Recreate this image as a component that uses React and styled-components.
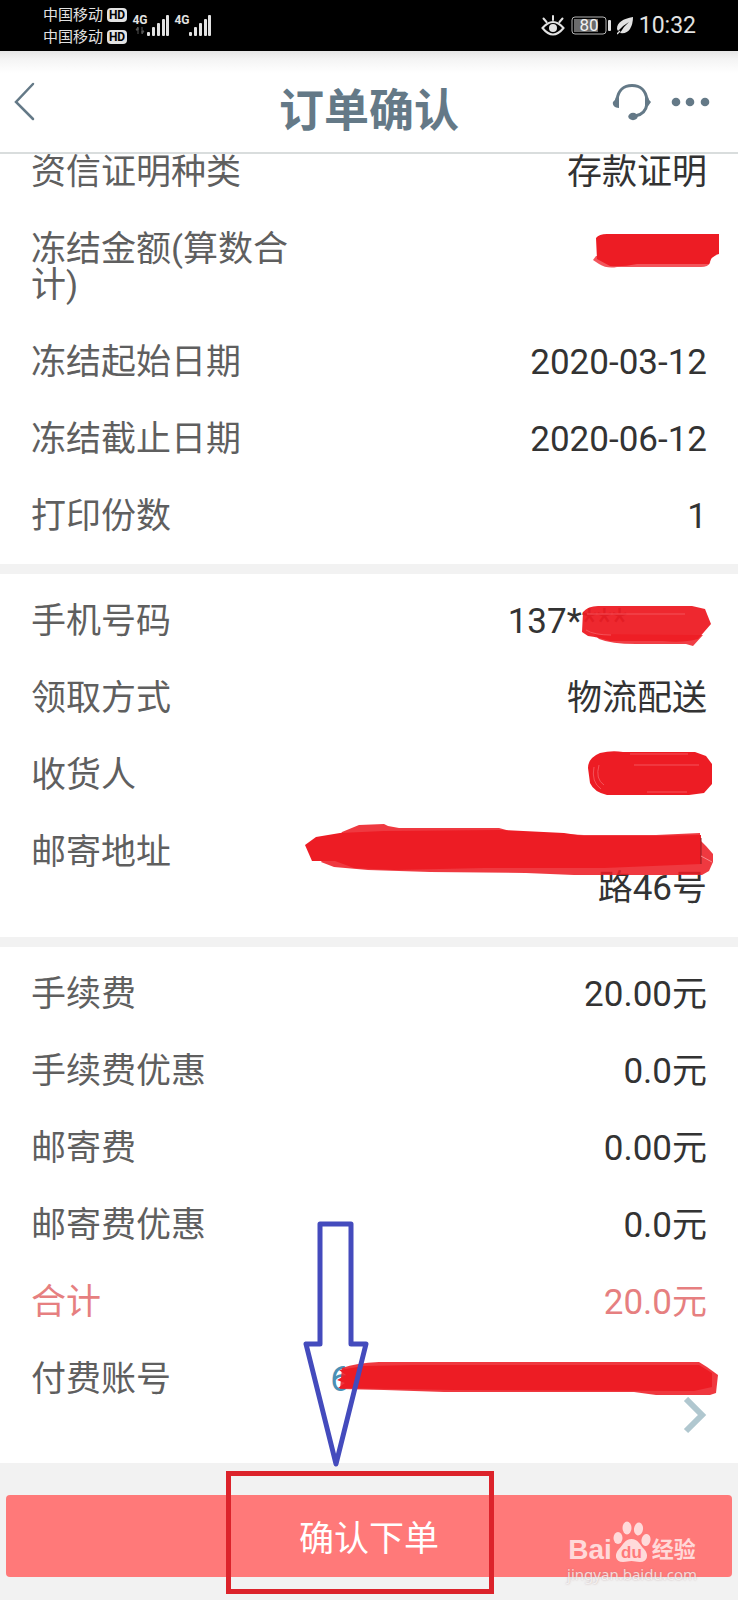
import React from 'react';
import styled, { createGlobalStyle } from 'styled-components';

const GlobalStyle = createGlobalStyle`
  * { box-sizing: border-box; }
  body {
    margin: 0;
    background: #f2f2f2;
    font-family: Roboto, "Noto Sans CJK SC", sans-serif;
    color: #333;
  }
  button { font-family: inherit; border: 0; padding: 0; background: none; cursor: pointer; }
  svg { display: block; flex: none; }
`;

const Page = styled.div`
  display: flex;
  flex-direction: column;
  min-height: 100vh;
  overflow: hidden;
`;

const StatusBar = styled.div`
  display: flex;
  align-items: center;
  justify-content: space-between;
  height: 51px;
  padding: 0 42px 0 43px;
  background: #000;
  color: #e2e2e2;
`;

const StatusGroup = styled.div`
  display: flex;
  align-items: center;
  gap: 6px;
`;

const Carriers = styled.div`
  display: flex;
  flex-direction: column;
`;

const Carrier = styled.div`
  display: flex;
  align-items: center;
  gap: 4px;
  font-size: 15px;
  line-height: 22px;
`;

const HdBadge = styled.span`
  width: 20px;
  height: 14px;
  border-radius: 4px;
  background: #e2e2e2;
  color: #000;
  font-size: 12px;
  font-weight: 700;
  line-height: 14px;
  text-align: center;
`;

const Network = styled.div`
  display: flex;
  align-items: flex-start;
`;

const NetworkType = styled.span`
  display: flex;
  flex-direction: column;
  align-items: center;
  width: 14px;
  font-family: "Liberation Sans Narrow", Roboto, sans-serif;
  font-size: 12px;
  font-weight: 700;
  line-height: 12px;
`;

const Clock = styled.time`
  font-size: 23px;
  line-height: 28px;
`;

const Header = styled.header`
  display: grid;
  grid-template-columns: 1fr auto 1fr;
  align-items: center;
  height: 103px;
  padding: 0 13px;
  border-bottom: 2px solid #d9dddd;
  background: linear-gradient(#e6e6e6, #f4f4f4 8px, #fff 22px);
  color: #647987;
`;

const Title = styled.h1`
  margin: 0;
  padding-top: 20px;
  font-size: 45px;
  font-weight: 700;
  line-height: 52px;
`;

const HeaderActions = styled.div`
  display: flex;
  align-items: center;
  justify-content: flex-end;
  gap: 18px;
  padding-right: 15px;
`;

const IconButton = styled.button`
  display: block;
  justify-self: start;
  color: inherit;
`;

const Section = styled.dl`
  display: flex;
  flex-direction: column;
  gap: 41px;
  margin: 0;
  padding: ${({ $first }) => ($first ? '1px 31px 29px' : '30px 31px 30px')};
  background: #fff;

  & + & {
    border-top: 10px solid #f2f2f2;
  }
`;

const Row = styled.div`
  display: flex;
  justify-content: space-between;
  font-size: 35px;
  line-height: 36px;
  color: ${({ $accent }) => ($accent ? '#e67f80' : 'inherit')};
`;

const Label = styled.dt`
  width: 40%;
  color: ${({ $accent }) => ($accent ? 'inherit' : '#5f5f5f')};
`;

const Value = styled.dd`
  display: flex;
  flex-direction: column;
  align-items: flex-end;
  width: 60%;
  margin: 0;
`;

const Line = styled.div`
  display: flex;
  align-items: center;
  justify-content: flex-end;
  height: 36px;
`;

const AccountDigit = styled.span`
  color: #4a90b5;
`;

const Mask = styled.svg`
  position: relative;
  margin-left: -${({ $overlap }) => $overlap || 0}px;
  margin-right: -${({ $bleed }) => $bleed || 0}px;
  fill: #ed1c24;
`;

const Footer = styled.footer`
  position: relative;
  flex: 1;
  margin-top: -1px;
  padding: 32px 6px 22px;
  background: #f2f2f2;
`;

const SubmitButton = styled.button`
  display: block;
  width: 100%;
  height: 82px;
  padding-top: 8px;
  border-radius: 4px;
  background: #ff7979;
  color: #fff;
  font-size: 35px;
  line-height: 36px;
`;

const HighlightBox = styled.div`
  position: absolute;
  top: 8px;
  left: calc(50% - 143px);
  width: 268px;
  height: 123px;
  border: 5px solid #dc232b;
  pointer-events: none;
`;

const Arrow = styled.svg`
  position: absolute;
  top: -243px;
  left: calc(50% - 67px);
  pointer-events: none;
`;

const Watermark = styled.div`
  position: absolute;
  top: 58px;
  right: 41px;
  display: flex;
  flex-direction: column;
  align-items: center;
  color: rgba(255, 255, 255, 0.72);
  pointer-events: none;
`;

const WatermarkBrand = styled.div`
  display: flex;
  align-items: flex-end;
  gap: 1px;
  height: 43px;
`;

const BrandLatin = styled.span`
  font-family: "Liberation Sans", sans-serif;
  font-size: 28px;
  font-weight: 700;
  line-height: 28px;
`;

const BrandHan = styled.span`
  font-size: 22px;
  font-weight: 700;
  line-height: 28px;
`;

const WatermarkSite = styled.span`
  font-family: "Noto Sans", sans-serif;
  font-size: 15px;
  line-height: 20px;
  text-shadow: 0 0 2px rgba(160, 120, 120, 0.6);
`;

function Signal({ traffic }) {
  return (
    <Network>
      <NetworkType>
        4G
        {traffic && (
          <svg width="10" height="9" viewBox="0 0 10 9" stroke="#555" fill="#555">
            <path d="M3 8V2M1 4l2-3v3z M7 1v6M9 5l-2 3V5z" />
          </svg>
        )}
      </NetworkType>
      <svg width="22" height="23" viewBox="0 0 22 23" fill="#e2e2e2">
        <rect x="0" y="18" width="3" height="4" rx="1" />
        <rect x="5" y="13" width="3" height="9" rx="1" />
        <rect x="10" y="9" width="3" height="13" rx="1" />
        <rect x="15" y="5" width="3" height="17" rx="1" />
        <rect x="19" y="1" width="3" height="21" rx="1" />
      </svg>
    </Network>
  );
}

function EyeIcon() {
  return (
    <svg width="24" height="22" viewBox="0 0 24 22" fill="none" stroke="#e2e2e2" strokeWidth="2" strokeLinecap="round">
      <path d="M1.500 13Q12 1 22.500 13Q12 26 1.500 13Z" />
      <circle cx="12" cy="13" r="4" fill="#e2e2e2" stroke="none" />
      <path d="M12 5V1M5.500 7L2.500 3.500M18.500 7L21.500 3.500" />
    </svg>
  );
}

function BatteryIcon() {
  return (
    <svg width="40" height="19" viewBox="0 0 40 19" role="img" aria-label="80%">
      <rect x="1" y="1" width="34" height="17" rx="3" fill="none" stroke="#b5b5b5" />
      <rect x="3" y="3" width="24" height="13" fill="#6b6b6b" />
      <rect x="37" y="4" width="3" height="11" rx="1" fill="#e2e2e2" />
      <text x="18" y="15" textAnchor="middle" fontSize="17" fontFamily="Roboto" fill="#f2f2f2">80</text>
    </svg>
  );
}

function LeafIcon() {
  return (
    <svg width="16" height="18" viewBox="0 0 16 18">
      <path d="M16 0C6 2 0 5 0 12L1 14Q5 9 12 5Q6 10 3 16Q10 17 13 12Q16 7 16 0Z" fill="#e2e2e2" />
      <path d="M0 17L3 14" stroke="#e2e2e2" strokeWidth="1.500" />
    </svg>
  );
}

function HeadsetIcon() {
  return (
    <svg width="40" height="38" viewBox="0 0 40 38" fill="none" stroke="currentColor">
      <path d="M5 17C6 7 12 2.500 20 2.500S34 7 35 17" strokeWidth="3" />
      <path d="M7 14V25C3 25 0 22 1 19Q3 18 4 14ZM33 14V25Q37 23 39 19Q37 18 36 14Z" fill="currentColor" stroke="none" />
      <path d="M35 21C34 28 30 32 23 33" strokeWidth="3" />
      <ellipse cx="21" cy="33.500" rx="4.700" ry="3.700" fill="currentColor" stroke="none" />
    </svg>
  );
}

function PawLogo() {
  return (
    <svg width="38" height="43" viewBox="0 0 38 43" fill="currentColor">
      <ellipse cx="5" cy="17" rx="4.500" ry="6" />
      <ellipse cx="14" cy="7" rx="4.500" ry="6.500" />
      <ellipse cx="25.500" cy="8" rx="4.500" ry="6.500" transform="rotate(8 25.500 8)" />
      <ellipse cx="33" cy="19" rx="4.500" ry="6" transform="rotate(10 33 19)" />
      <path d="M18.500 18C25 18 27 24 31 28C36 33 35 41 27 41C23 41 22 40 18.500 40S14 41 10 41C2 41 1 33 6 28C10 24 12 18 18.500 18Z" />
      <text x="18.500" y="37" textAnchor="middle" fontSize="17" fontWeight="700" fontFamily="Liberation Sans" fill="#ff7979">du</text>
    </svg>
  );
}

function Item({ label, children, accent }) {
  return (
    <Row $accent={accent}>
      <Label $accent={accent}>{label}</Label>
      <Value>{children}</Value>
    </Row>
  );
}

function AmountMask() {
  return (
    <Mask width="126" height="40" viewBox="0 0 126 40" $bleed={12}>
      <path d="M3 26L0 30L6 34Q14 39 24 37H108Q115 37 117 33L118 25Z" opacity=".75" />
      <path d="M3 8Q6 4 14 4H126V24Q118 26 116 34H44Q30 37 17 36L4 29Z" />
    </Mask>
  );
}

function PhoneMask() {
  return (
    <Mask width="131" height="50" viewBox="0 0 131 50" $bleed={5} $overlap={46}>
      <path d="M13 37L18 42Q30 47 55 47H105L112 49L122 38Z" opacity=".85" />
      <path d="M2 15Q7 9 17 9H111L124 12L130 27L117 42Q102 46 82 44H29Q17 40 7 39L1 35Z" opacity=".95" />
      <path d="M6 17H104M5 33Q13 38 30 38" fill="none" stroke="#f4535a" />
    </Mask>
  );
}

function ReceiverMask() {
  return (
    <Mask width="126" height="52" viewBox="0 0 126 52" $bleed={6}>
      <path d="M1 18Q1 8 13 3Q25 0 36 2H108L119 6L125 14V34L117 43L102 45H62L20 45Q7 42 3 33Z" />
      <path d="M7 17Q4 32 14 39M12 15Q8 29 17 35M43 4H101M47 15H112M100 42H60" fill="none" stroke="#f4535a" />
    </Mask>
  );
}

function AddressMask() {
  return (
    <Mask width="410" height="64" viewBox="0 0 410 64" $bleed={7}>
      <path d="M17 41L30 46L64 49L126 51L222 52L270 54H398L405 50L409 41V33L402 25L396 19V12L352 14L280 14L210 11L195 7H95L84 5L80 3L55 4L38 11Z" opacity=".87" />
      <path d="M1 24L12 16L36 12L80 10L198 9L260 12L280 15H345L397 14V43L300 47L180 47L90 49L50 47L31 40H8Z" />
      <path d="M397 17V43" stroke="#8e1d22" fill="none" />
      <path d="M397 35L408 41" stroke="#f7888c" fill="none" />
    </Mask>
  );
}

function AccountMask() {
  return (
    <Mask width="385" height="40" viewBox="0 0 385 40" $bleed={12} $overlap={16}>
      <path d="M8 8Q22 3 45 2H365L373 7L384 15L382 33L376 35H322L300 32H110L50 30L6 29Z" opacity=".88" />
      <path d="M5 10L30 6L80 5H365L378 13V27L360 31L120 30L4 28L11 23L3 20L12 15Z" />
    </Mask>
  );
}

export default function App() {
  return (
    <Page>
      <GlobalStyle />
      <StatusBar>
        <StatusGroup>
          <Carriers>
            <Carrier>中国移动<HdBadge>HD</HdBadge></Carrier>
            <Carrier>中国移动<HdBadge>HD</HdBadge></Carrier>
          </Carriers>
          <Signal traffic />
          <Signal />
        </StatusGroup>
        <StatusGroup>
          <EyeIcon />
          <BatteryIcon />
          <LeafIcon />
          <Clock>10:32</Clock>
        </StatusGroup>
      </StatusBar>

      <Header>
        <IconButton aria-label="返回">
          <svg width="22" height="40" viewBox="0 0 22 40" fill="none" stroke="currentColor" strokeWidth="2.500" strokeLinecap="round">
            <path d="M20 2L3 20L20 37" />
          </svg>
        </IconButton>
        <Title>订单确认</Title>
        <HeaderActions>
          <IconButton aria-label="客服"><HeadsetIcon /></IconButton>
          <IconButton aria-label="更多">
            <svg width="40" height="10" viewBox="0 0 40 10" fill="currentColor">
              <circle cx="6" cy="5" r="4.300" />
              <circle cx="20" cy="5" r="4.300" />
              <circle cx="35" cy="5" r="4.300" />
            </svg>
          </IconButton>
        </HeaderActions>
      </Header>

      <Section $first>
        <Item label="资信证明种类">存款证明</Item>
        <Item label="冻结金额(算数合计)"><Line><AmountMask /></Line></Item>
        <Item label="冻结起始日期">2020-03-12</Item>
        <Item label="冻结截止日期">2020-06-12</Item>
        <Item label="打印份数">1</Item>
      </Section>

      <Section>
        <Item label="手机号码"><Line>137****<PhoneMask /></Line></Item>
        <Item label="领取方式">物流配送</Item>
        <Item label="收货人"><Line><ReceiverMask /></Line></Item>
        <Item label="邮寄地址">
          <Line><AddressMask /></Line>
          <Line>路46号</Line>
        </Item>
      </Section>

      <Section>
        <Item label="手续费">20.00元</Item>
        <Item label="手续费优惠">0.0元</Item>
        <Item label="邮寄费">0.00元</Item>
        <Item label="邮寄费优惠">0.0元</Item>
        <Item label="合计" accent>20.0元</Item>
        <Item label="付费账号">
          <Line><AccountDigit>6</AccountDigit><AccountMask /></Line>
          <Line>
            <IconButton aria-label="选择付费账号">
              <svg width="24" height="38" viewBox="0 0 24 38" fill="none" stroke="#b0c7cf" strokeWidth="6">
                <path d="M3 2L19 18L3 34" />
              </svg>
            </IconButton>
          </Line>
        </Item>
      </Section>

      <Footer>
        <SubmitButton>确认下单</SubmitButton>
        <Watermark>
          <WatermarkBrand>
            <BrandLatin>Bai</BrandLatin>
            <PawLogo />
            <BrandHan>经验</BrandHan>
          </WatermarkBrand>
          <WatermarkSite>jingyan.baidu.com</WatermarkSite>
        </Watermark>
        <HighlightBox />
        <Arrow width="68" height="248" viewBox="0 0 68 248" fill="none" stroke="#444bbd" strokeWidth="5" strokeLinejoin="round">
          <path d="M18 4H49V124H64L34 244L4 124H18Z" />
        </Arrow>
      </Footer>
    </Page>
  );
}
